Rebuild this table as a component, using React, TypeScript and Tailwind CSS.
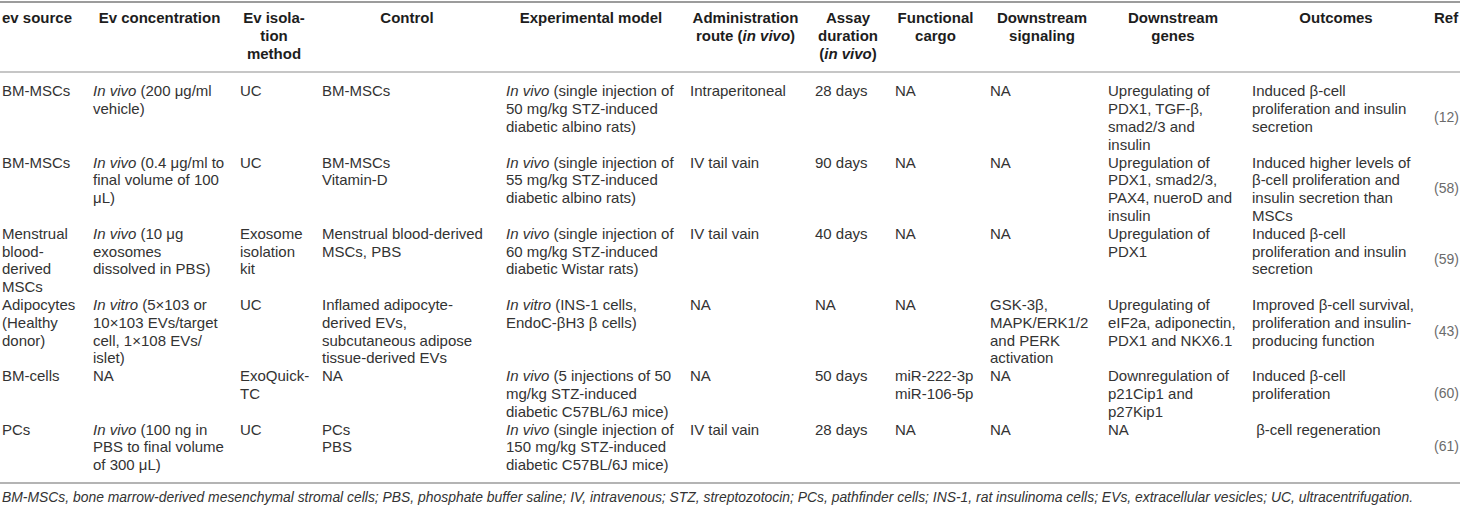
import React from "react"

type Line = React.ReactNode
type Row = Line[][]

const I = ({ children }: { children: React.ReactNode }) => <i>{children}</i>

const cols = [
  "w-[93px]",
  "w-[147px]",
  "w-[82px]",
  "w-[184px]",
  "w-[184px]",
  "w-[125px]",
  "w-[80px]",
  "w-[95px]",
  "w-[118px]",
  "w-[144px]",
  "w-[182px]",
  "w-[26px]",
]

const headers: Line[][] = [
  ["ev source"],
  ["Ev concentration"],
  ["Ev isola-", "tion", "method"],
  ["Control"],
  ["Experimental model"],
  ["Administration", <>route (<I>in vivo</I>)</>],
  ["Assay", "duration", <>(<I>in vivo</I>)</>],
  ["Functional", "cargo"],
  ["Downstream", "signaling"],
  ["Downstream", "genes"],
  ["Outcomes"],
  ["Ref"],
]

const rows: Row[] = [
  [
    ["BM-MSCs"],
    [<><I>In vivo</I> (200 μg/ml</>, "vehicle)"],
    ["UC"],
    ["BM-MSCs"],
    [<><I>In vivo</I> (single injection of</>, "50 mg/kg STZ-induced", "diabetic albino rats)"],
    ["Intraperitoneal"],
    ["28 days"],
    ["NA"],
    ["NA"],
    ["Upregulating of", "PDX1, TGF-β,", "smad2/3 and", "insulin"],
    ["Induced β-cell", "proliferation and insulin", "secretion"],
    ["(12)"],
  ],
  [
    ["BM-MSCs"],
    [<><I>In vivo</I> (0.4 μg/ml to</>, "final volume of 100", "μL)"],
    ["UC"],
    ["BM-MSCs", "Vitamin-D"],
    [<><I>In vivo</I> (single injection of</>, "55 mg/kg STZ-induced", "diabetic albino rats)"],
    ["IV tail vain"],
    ["90 days"],
    ["NA"],
    ["NA"],
    ["Upregulation of", "PDX1, smad2/3,", "PAX4, nueroD and", "insulin"],
    ["Induced higher levels of", "β-cell proliferation and", "insulin secretion than", "MSCs"],
    ["(58)"],
  ],
  [
    ["Menstrual", "blood-", "derived", "MSCs"],
    [<><I>In vivo</I> (10 μg</>, "exosomes", "dissolved in PBS)"],
    ["Exosome", "isolation", "kit"],
    ["Menstrual blood-derived", "MSCs, PBS"],
    [<><I>In vivo</I> (single injection of</>, "60 mg/kg STZ-induced", "diabetic Wistar rats)"],
    ["IV tail vain"],
    ["40 days"],
    ["NA"],
    ["NA"],
    ["Upregulation of", "PDX1"],
    ["Induced β-cell", "proliferation and insulin", "secretion"],
    ["(59)"],
  ],
  [
    ["Adipocytes", "(Healthy", "donor)"],
    [<><I>In vitro</I> (5×103 or</>, "10×103 EVs/target", "cell, 1×108 EVs/", "islet)"],
    ["UC"],
    ["Inflamed adipocyte-", "derived EVs,", "subcutaneous adipose", "tissue-derived EVs"],
    [<><I>In vitro</I> (INS-1 cells,</>, "EndoC-βH3 β cells)"],
    ["NA"],
    ["NA"],
    ["NA"],
    ["GSK-3β,", "MAPK/ERK1/2", "and PERK", "activation"],
    ["Upregulating of", "eIF2a, adiponectin,", "PDX1 and NKX6.1"],
    ["Improved β-cell survival,", "proliferation and insulin-", "producing function"],
    ["(43)"],
  ],
  [
    ["BM-cells"],
    ["NA"],
    ["ExoQuick-", "TC"],
    ["NA"],
    [<><I>In vivo</I> (5 injections of 50</>, "mg/kg STZ-induced", "diabetic C57BL/6J mice)"],
    ["NA"],
    ["50 days"],
    ["miR-222-3p", "miR-106-5p"],
    ["NA"],
    ["Downregulation of", "p21Cip1 and", "p27Kip1"],
    ["Induced β-cell", "proliferation"],
    ["(60)"],
  ],
  [
    ["PCs"],
    [<><I>In vivo</I> (100 ng in</>, "PBS to final volume", "of 300 μL)"],
    ["UC"],
    ["PCs", "PBS"],
    [<><I>In vivo</I> (single injection of</>, "150 mg/kg STZ-induced", "diabetic C57BL/6J mice)"],
    ["IV tail vain"],
    ["28 days"],
    ["NA"],
    ["NA"],
    ["NA"],
    ["\u00a0β-cell regeneration"],
    ["(61)"],
  ],
]

export default function App() {
  return (
    <div className="w-[1460px] h-[507px] overflow-hidden bg-white font-['Liberation_Sans',Arial,sans-serif] text-[15px] leading-[17.8px] text-[#333]">
      <div className="border-t-2 border-[#9c9c9c] mt-px">
        <table className="table-fixed border-collapse w-[1460px]">
          <colgroup>
            {cols.map((c, i) => (
              <col key={i} className={c} />
            ))}
          </colgroup>
          <thead>
            <tr className="border-b-2 border-[#c6c6c6]">
              {headers.map((h, i) => (
                <th
                  key={i}
                  className={
                    i === 0
                      ? "align-top text-left font-bold text-[#1d1d1d] pt-[6px] pb-[9px] pl-[2px]"
                      : i === headers.length - 1
                        ? "align-top text-left font-bold text-[#1d1d1d] pt-[6px] pb-[9px]"
                        : "align-top text-center font-bold text-[#1d1d1d] pt-[6px] pb-[9px] pr-[14px]"
                  }
                >
                  {h.map((l, j) => (
                    <div key={j} className="whitespace-nowrap">
                      {l}
                    </div>
                  ))}
                </th>
              ))}
            </tr>
          </thead>
          <tbody>
            {rows.map((r, ri) => (
              <tr key={ri} className={ri === rows.length - 1 ? "border-b-2 border-[#b4b4b4]" : ""}>
                {r.map((cell, ci) => {
                  const pt = ri === 0 ? "pt-[9px]" : ""
                  const pb = ri === rows.length - 1 ? "pb-[8px]" : ""
                  const last = ci === r.length - 1
                  return (
                    <td
                      key={ci}
                      className={`${last ? "align-middle text-[14px] text-[#6b6b6b]" : "align-top"} ${ci === 0 ? "pl-[2px]" : ""} ${pt} ${pb}`}
                    >
                      {cell.map((l, j) => (
                        <div key={j} className="whitespace-pre">
                          {l}
                        </div>
                      ))}
                    </td>
                  )
                })}
              </tr>
            ))}
          </tbody>
        </table>
      </div>
      <p className="pt-[4px] pl-[2px] italic text-[13.9px] leading-[18px] text-[#333] whitespace-nowrap">
        BM-MSCs, bone marrow-derived mesenchymal stromal cells; PBS, phosphate buffer saline; IV, intravenous; STZ, streptozotocin; PCs, pathfinder cells; INS-1, rat insulinoma cells; EVs, extracellular vesicles; UC, ultracentrifugation.
      </p>
    </div>
  )
}
